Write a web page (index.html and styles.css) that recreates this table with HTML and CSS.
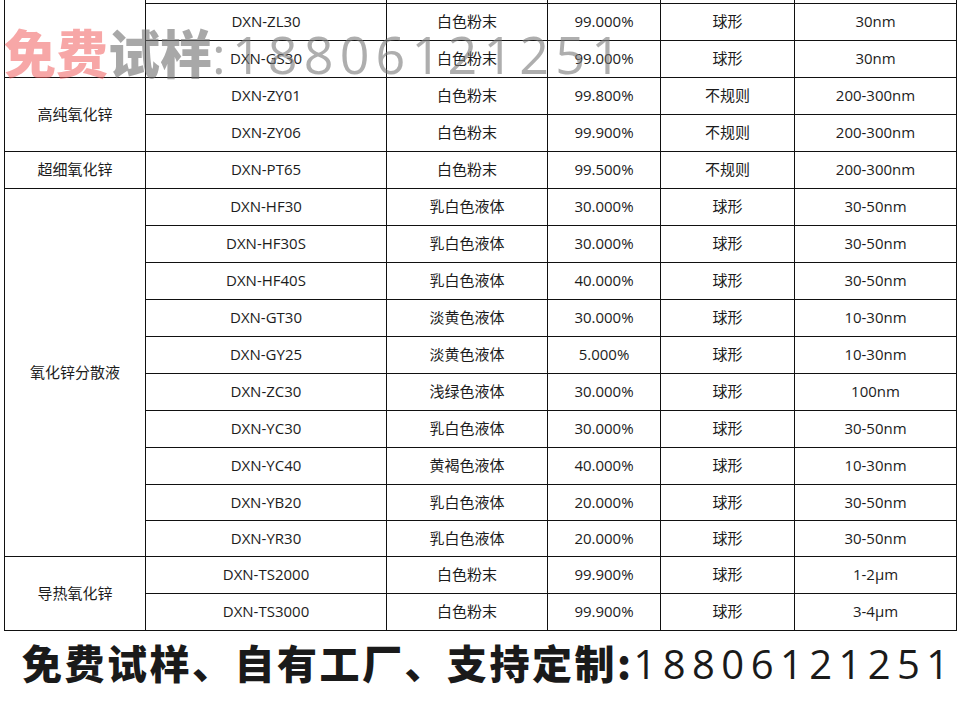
FILE: index.html
```html
<!DOCTYPE html>
<html lang="zh">
<head>
<meta charset="utf-8">
<link rel="stylesheet" href="styles.css">
</head>
<body>
<div class="sheet">
  <div class="clip">
    <table class="spec">
      <colgroup>
        <col class="c1"><col class="c2"><col class="c3"><col class="c4"><col class="c5"><col class="c6">
      </colgroup>
      <tbody>
        <tr><td rowspan="3"></td><td></td><td></td><td></td><td></td><td></td></tr>
        <tr><td>DXN-ZL30</td><td>白色粉末</td><td>99.000%</td><td>球形</td><td>30nm</td></tr>
        <tr><td>DXN-GS30</td><td>白色粉末</td><td>99.000%</td><td>球形</td><td>30nm</td></tr>
        <tr><td rowspan="2">高纯氧化锌</td><td>DXN-ZY01</td><td>白色粉末</td><td>99.800%</td><td>不规则</td><td>200-300nm</td></tr>
        <tr><td>DXN-ZY06</td><td>白色粉末</td><td>99.900%</td><td>不规则</td><td>200-300nm</td></tr>
        <tr><td>超细氧化锌</td><td>DXN-PT65</td><td>白色粉末</td><td>99.500%</td><td>不规则</td><td>200-300nm</td></tr>
        <tr><td rowspan="10">氧化锌分散液</td><td>DXN-HF30</td><td>乳白色液体</td><td>30.000%</td><td>球形</td><td>30-50nm</td></tr>
        <tr><td>DXN-HF30S</td><td>乳白色液体</td><td>30.000%</td><td>球形</td><td>30-50nm</td></tr>
        <tr><td>DXN-HF40S</td><td>乳白色液体</td><td>40.000%</td><td>球形</td><td>30-50nm</td></tr>
        <tr><td>DXN-GT30</td><td>淡黄色液体</td><td>30.000%</td><td>球形</td><td>10-30nm</td></tr>
        <tr><td>DXN-GY25</td><td>淡黄色液体</td><td>5.000%</td><td>球形</td><td>10-30nm</td></tr>
        <tr><td>DXN-ZC30</td><td>浅绿色液体</td><td>30.000%</td><td>球形</td><td>100nm</td></tr>
        <tr><td>DXN-YC30</td><td>乳白色液体</td><td>30.000%</td><td>球形</td><td>30-50nm</td></tr>
        <tr><td>DXN-YC40</td><td>黄褐色液体</td><td>40.000%</td><td>球形</td><td>10-30nm</td></tr>
        <tr class="short"><td>DXN-YB20</td><td>乳白色液体</td><td>20.000%</td><td>球形</td><td>30-50nm</td></tr>
        <tr class="short"><td>DXN-YR30</td><td>乳白色液体</td><td>20.000%</td><td>球形</td><td>30-50nm</td></tr>
        <tr><td rowspan="2">导热氧化锌</td><td>DXN-TS2000</td><td>白色粉末</td><td>99.900%</td><td>球形</td><td>1-2μm</td></tr>
        <tr><td>DXN-TS3000</td><td>白色粉末</td><td>99.900%</td><td>球形</td><td>3-4μm</td></tr>
      </tbody>
    </table>
    <div class="watermark"><span class="wm-red">免费</span><span class="wm-gray">试样</span><span class="wm-num">:18806121251</span></div>
  </div>
  <div class="banner"><span class="bn-cn">免费试样、自有工厂、支持定制:</span><span class="bn-num">18806121251</span></div>
</div>
</body>
</html>
```
FILE: styles.css
```css
html, body {
  margin: 0;
  padding: 0;
  background: #ffffff;
}
.sheet {
  width: 960px;
  height: 702px;
  overflow: hidden;
  font-family: "Open Sans", "Noto Sans CJK SC", sans-serif;
  color: #1c1c1c;
}
.clip {
  position: relative;
  height: 632px;
  overflow: hidden;
}
.spec {
  border-collapse: collapse;
  table-layout: fixed;
  width: 952px;
  margin: -34px 0 0 4px;
  font-size: 15px;
}
.c1 { width: 141px; }
.c2 { width: 241px; }
.c3 { width: 161px; }
.c4 { width: 113px; }
.c5 { width: 134px; }
.c6 { width: 162px; }
.spec td {
  border: 1px solid #111;
  height: 37px;
  padding: 0 0 2px 0;
  box-sizing: border-box;
  text-align: center;
  vertical-align: middle;
  line-height: 20px;
  white-space: nowrap;
}
.spec tr.short td {
  height: 36px;
}
.watermark {
  position: absolute;
  left: 4px;
  top: 22px;
  font-size: 52px;
  line-height: 60px;
  white-space: nowrap;
  pointer-events: none;
}
.wm-red {
  font-family: "Noto Sans CJK SC", sans-serif;
  font-weight: 900;
  color: rgba(240, 95, 95, 0.55);
}
.wm-gray {
  font-family: "Noto Sans CJK SC", sans-serif;
  font-weight: 900;
  color: rgba(110, 110, 110, 0.6);
}
.wm-num {
  font-family: "Open Sans", sans-serif;
  font-weight: 400;
  letter-spacing: 6.2px;
  color: rgba(120, 120, 120, 0.6);
}
.banner {
  padding: 4px 0 0 22px;
  font-size: 40px;
  line-height: 52px;
  white-space: nowrap;
  color: #1a1a1a;
}
.bn-cn {
  font-family: "Noto Sans CJK SC", sans-serif;
  font-weight: 900;
  letter-spacing: 2.5px;
}
.bn-num {
  font-family: "Open Sans", sans-serif;
  font-weight: 400;
  letter-spacing: 6.4px;
}
```
